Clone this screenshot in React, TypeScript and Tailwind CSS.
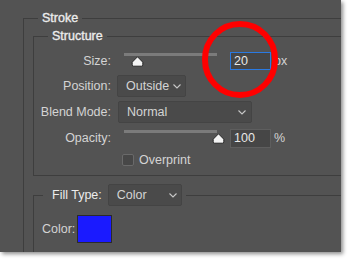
import React from "react";

const font = { fontFamily: '"Liberation Sans", Arial, sans-serif' };

const Chevron = () => (
  <svg width="8" height="5" viewBox="0 0 8 5" fill="none">
    <path d="M0.5 0.5 L4 4 L7.5 0.5" stroke="#c8c8c8" strokeWidth="1.1" />
  </svg>
);

const Thumb = () => (
  <svg width="13" height="11" viewBox="0 0 13 11">
    <path
      d="M6.5 0.8 L11.8 6.2 V8.8 Q11.8 10.2 10.4 10.2 H2.6 Q1.2 10.2 1.2 8.8 V6.2 Z"
      fill="#f4f4f4"
      stroke="#262626"
      strokeWidth="1"
    />
  </svg>
);

function Slider({ pos }: { pos: number }) {
  return (
    <div className="relative w-[93px] h-[22px] ml-[13px]">
      <div className="absolute left-0 top-[3px] w-[93px] h-[3px] bg-[#7b7b7b]" />
      <div className="absolute top-[6px]" style={{ left: pos }}>
        <Thumb />
      </div>
    </div>
  );
}

function Label({ children }: { children: React.ReactNode }) {
  return <div className="w-[77px] text-right shrink-0">{children}</div>;
}

export default function App() {
  return (
    <div className="w-[349px] h-[261px] bg-white overflow-hidden text-[12.5px] text-[#d4d4d4]" style={font}>
      <div className="relative w-[341px] h-[252px] bg-[#535353] overflow-hidden shadow-[2px_2px_4px_rgba(0,0,0,0.45)]">
        <fieldset className="ml-[23px] mt-[10px] w-[330px] h-[260px] border-l border-t border-[#3e3e3e]">
          <legend className="ml-[14px] px-[4px] h-[16px] leading-[16px] text-[#ececec] [-webkit-text-stroke:0.35px_#ececec]">
            Stroke
          </legend>

          <fieldset className="ml-[9px] mt-[2px] w-[320px] border-l border-t border-b border-[#3e3e3e] pt-[6px] pb-[7px]">
            <legend className="ml-[14px] px-[4px] h-[16px] leading-[16px] text-[#ececec] [-webkit-text-stroke:0.35px_#ececec]">
              Structure
            </legend>

            <div className="flex items-center h-[22px]">
              <Label>Size:</Label>
              <Slider pos={7} />
              <div className="ml-[13px] w-[41px] h-[18px] border border-[#2a7ae2] bg-[#464646] pl-[3px] leading-[16px] text-[#e8e8e8]">
                20
              </div>
              <span className="ml-[3px]">px</span>
            </div>

            <div className="flex items-center h-[22px] mt-[3px]">
              <Label>Position:</Label>
              <div className="ml-[6px] w-[69px] h-[22px] flex items-center justify-between pl-[8px] pr-[4px] bg-[#4a4a4a] border border-[#444] rounded-[2px]">
                <span>Outside</span>
                <Chevron />
              </div>
            </div>

            <div className="flex items-center h-[22px] mt-[4px]">
              <Label>Blend Mode:</Label>
              <div className="ml-[7px] w-[134px] h-[22px] flex items-center justify-between pl-[8px] pr-[5px] bg-[#4a4a4a] border border-[#444] rounded-[2px]">
                <span>Normal</span>
                <Chevron />
              </div>
            </div>

            <div className="flex items-center h-[22px] mt-[4px]">
              <Label>Opacity:</Label>
              <Slider pos={88} />
              <div className="ml-[13px] w-[41px] h-[19px] border border-[#5e5e5e] bg-[#464646] pl-[3px] leading-[17px] text-[#e8e8e8]">
                100
              </div>
              <span className="ml-[3px]">%</span>
            </div>

            <div className="flex items-center h-[16px] mt-[3px] ml-[88px]">
              <div className="w-[12px] h-[12px] border border-[#6a6a6a] bg-[#474747] rounded-[2px]" />
              <span className="ml-[5px]">Overprint</span>
            </div>
          </fieldset>

          <fieldset className="ml-[9px] mt-[8px] w-[320px] h-[100px] border-l border-t border-[#3e3e3e]">
            <legend className="ml-[9px] pl-[9px] pr-[4px]">
              <div className="flex items-center h-[22px]">
                <span className="text-[#ececec]">Fill Type:</span>
                <div className="ml-[6px] w-[74px] h-[22px] flex items-center justify-between pl-[8px] pr-[4px] bg-[#4a4a4a] border border-[#444] rounded-[2px]">
                  <span>Color</span>
                  <Chevron />
                </div>
              </div>
            </legend>
            <div className="flex items-center mt-[9px] ml-[8px]">
              <span>Color:</span>
              <div className="ml-[2px] w-[35px] h-[28px] bg-[#1a1aff] border border-[#2b2b2b]" />
            </div>
          </fieldset>
        </fieldset>

        <div className="absolute left-[202px] top-[21px] w-[76px] h-[77px] rounded-full border-[6px] border-[#ff0000]" />
      </div>
    </div>
  );
}
